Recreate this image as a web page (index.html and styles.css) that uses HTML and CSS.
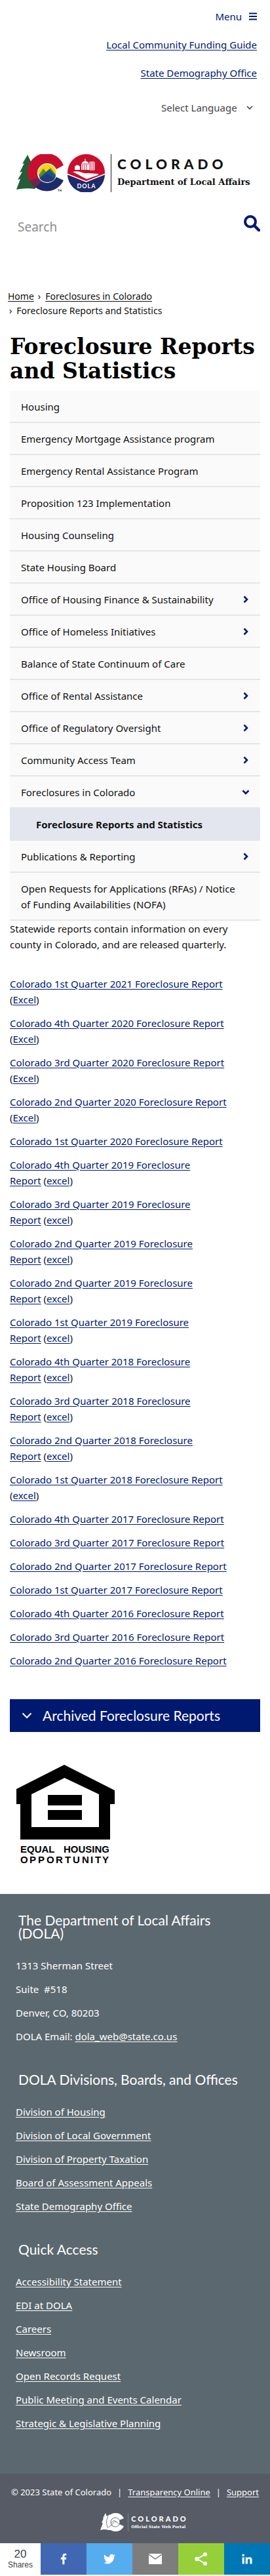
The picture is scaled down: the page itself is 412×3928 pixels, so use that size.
FILE: index.html
```html
<!DOCTYPE html>
<html lang="en">
<head>
<meta charset="utf-8">
<meta name="viewport" content="width=device-width, initial-scale=1">
<title>Foreclosure Reports and Statistics | Department of Local Affairs</title>
<link rel="stylesheet" href="styles.css">
</head>
<body>
<svg class="defs" width="0" height="0" aria-hidden="true">
  <symbol id="chev" viewBox="0 0 8 12"><path d="M1.5 1.5L6 6L1.5 10.5" fill="none" stroke="currentColor" stroke-width="2.6"/></symbol>
</svg>

<header class="header">
  <div class="top-links">
    <button class="menu-btn" type="button">Menu
      <svg width="12" height="12" viewBox="0 0 12 12" aria-hidden="true"><path d="M0 1.5h12M0 6h12M0 10.5h12" stroke="currentColor" stroke-width="2"/></svg>
    </button>
    <a href="#">Local Community Funding Guide</a>
    <a href="#">State Demography Office</a>
    <div class="lang">
      <select aria-label="Select Language"><option>Select Language</option></select>
      <svg width="10" height="7" viewBox="0 0 10 7" aria-hidden="true"><path d="M1 1l4 4l4-4" fill="none" stroke="currentColor" stroke-width="1.6"/></svg>
    </div>
  </div>

  <a class="logo" href="#" aria-label="Colorado Department of Local Affairs">
    <svg width="136" height="58" viewBox="0 0 136 58" aria-hidden="true">
      <path d="M17 1L9 15l3-1L5 28l4-1L2 39l4-1L0 54q14-3 28-1L40 40V12L24 15z" fill="#245d38"/>
      <path d="M72 17A28.500 28.500 0 1 0 26.500 48.500L36 38A15 15 0 0 1 61 23z" fill="#c8102e"/>
      <path d="M72 40A28.500 28.500 0 0 1 26.500 48.500L37 38L61 35z" fill="#1f2a6b"/>
      <path d="M18.500 29A28.500 28.500 0 0 0 26.500 49L38 38L32 24z" fill="#c8102e"/>
      <path d="M21 41A28.500 28.500 0 0 0 29 51L40 40L35 35z" fill="#6b2350"/>
      <circle cx="47" cy="29" r="15" fill="#fff"/>
      <circle cx="47" cy="29" r="13.500" fill="#ffd100"/>
      <path d="M34 32L41 22L46 28L52 21L60 31Q60 42.500 47 42.500Q37 42 34 32z" fill="#5d8a2f"/>
      <path d="M35 36L50 23L60 33Q58 42.500 47 42.500Q38 42 35 36z" fill="#12558f"/>
      <path d="M36 37L47 30L58 37Q54 42.500 47 42.500Q40 42.500 36 37z" fill="#243a78"/>
      <path d="M63 54h2.500M64.200 54v3M66.500 57v-3l1 2l1-2v3" fill="none" stroke="#333" stroke-width=".7"/>
      <circle cx="106.500" cy="28.500" r="28.500" fill="#c8102e"/>
      <path d="M78 30.500L106.500 42L135 30.500A28.500 28.500 0 0 1 78 30.500z" fill="#1f2a6b"/>
      <path d="M78 30.500L106.500 42L135 30.500" fill="none" stroke="#fff" stroke-width="1.500"/>
      <path d="M86 27q8-2 14 1q5 2 9 1l15 1q3 1-1 2.500L107 38q-6-3-13-7z" fill="#fff"/>
      <path d="M89 24v-5q4-5 8 0v5zM99 24v-9q2-4 5.500-4.500V7h1v3.500q4 .5 5.500 4.500v9z" fill="#fff"/>
      <path d="M101 16v8M104 16v8M107 16v8M99 15h12" stroke="#c8102e" stroke-width=".9"/>
      <path d="M112 12h7v12h-7zM112 15h7M112 18h7M112 21h7M114.300 12v12M116.600 12v12" fill="none" stroke="#fff" stroke-width="1"/>
      <text x="107" y="52" text-anchor="middle" class="seal-text">DOLA</text>
    </svg>
    <span class="logo-words">
      <span class="wordmark">COLORADO</span>
      <span class="dept">Department of Local Affairs</span>
    </span>
  </a>

  <form class="search" role="search">
    <input type="search" placeholder="Search" aria-label="Search">
    <button type="button" aria-label="Submit search">
      <svg width="25" height="25" viewBox="0 0 25 25" aria-hidden="true"><circle cx="10" cy="10" r="8" fill="none" stroke="currentColor" stroke-width="4"/><path d="M16 16l7 7" stroke="currentColor" stroke-width="4.500" stroke-linecap="round"/></svg>
    </button>
  </form>
</header>

<main class="main">
  <nav class="crumbs" aria-label="Breadcrumb">
    <div><a href="#">Home</a><span class="sep">›</span><a href="#">Foreclosures in Colorado</a></div>
    <div><span class="sep">›</span>Foreclosure Reports and Statistics</div>
  </nav>
  <h1>Foreclosure Reports and Statistics</h1>

  <ul class="side-nav">
    <li><a href="#">Housing</a></li>
    <li><a href="#">Emergency Mortgage Assistance program</a></li>
    <li><a href="#">Emergency Rental Assistance Program</a></li>
    <li><a href="#">Proposition 123 Implementation</a></li>
    <li><a href="#">Housing Counseling</a></li>
    <li><a href="#">State Housing Board</a></li>
    <li><a href="#">Office of Housing Finance &amp; Sustainability</a><svg class="chev"><use href="#chev"/></svg></li>
    <li><a href="#">Office of Homeless Initiatives</a><svg class="chev"><use href="#chev"/></svg></li>
    <li><a href="#">Balance of State Continuum of Care</a></li>
    <li><a href="#">Office of Rental Assistance</a><svg class="chev"><use href="#chev"/></svg></li>
    <li><a href="#">Office of Regulatory Oversight</a><svg class="chev"><use href="#chev"/></svg></li>
    <li><a href="#">Community Access Team</a><svg class="chev"><use href="#chev"/></svg></li>
    <li><a href="#">Foreclosures in Colorado</a><svg class="chev open"><use href="#chev"/></svg></li>
    <li class="current"><a href="#" aria-current="page">Foreclosure Reports and Statistics</a></li>
    <li><a href="#">Publications &amp; Reporting</a><svg class="chev"><use href="#chev"/></svg></li>
    <li><a href="#">Open Requests for Applications (RFAs) / Notice of Funding Availabilities (NOFA)</a></li>
  </ul>

  <p class="intro">Statewide reports contain information on every county in Colorado, and are released quarterly.</p>

  <div class="reports">
    <p><a href="#">Colorado 1st Quarter 2021 Foreclosure Report</a> (<a href="#">Excel</a>)</p>
    <p><a href="#">Colorado 4th Quarter 2020 Foreclosure Report</a> (<a href="#">Excel</a>)</p>
    <p><a href="#">Colorado 3rd Quarter 2020 Foreclosure Report</a> (<a href="#">Excel</a>)</p>
    <p><a href="#">Colorado 2nd Quarter 2020 Foreclosure Report</a> (<a href="#">Excel</a>)</p>
    <p><a href="#">Colorado 1st Quarter 2020 Foreclosure Report</a></p>
    <p><a href="#">Colorado 4th Quarter 2019 Foreclosure Report</a>&nbsp;(<a href="#">excel</a>)</p>
    <p><a href="#">Colorado 3rd Quarter 2019 Foreclosure Report</a>&nbsp;(<a href="#">excel</a>)</p>
    <p><a href="#">Colorado 2nd Quarter 2019 Foreclosure Report</a>&nbsp;(<a href="#">excel</a>)</p>
    <p><a href="#">Colorado 2nd Quarter 2019 Foreclosure Report</a>&nbsp;(<a href="#">excel</a>)</p>
    <p><a href="#">Colorado 1st Quarter 2019 Foreclosure Report</a>&nbsp;(<a href="#">excel</a>)</p>
    <p><a href="#">Colorado 4th Quarter 2018 Foreclosure Report</a>&nbsp;(<a href="#">excel</a>)</p>
    <p><a href="#">Colorado 3rd Quarter 2018 Foreclosure Report</a>&nbsp;(<a href="#">excel</a>)</p>
    <p><a href="#">Colorado 2nd Quarter 2018 Foreclosure Report</a>&nbsp;(<a href="#">excel</a>)</p>
    <p><a href="#">Colorado 1st Quarter 2018 Foreclosure Report</a> (<a href="#">excel</a>)</p>
    <p><a href="#">Colorado 4th Quarter 2017 Foreclosure Report</a></p>
    <p><a href="#">Colorado 3rd Quarter 2017 Foreclosure Report</a></p>
    <p><a href="#">Colorado 2nd Quarter 2017 Foreclosure Report</a></p>
    <p><a href="#">Colorado 1st Quarter 2017 Foreclosure Report</a></p>
    <p><a href="#">Colorado 4th Quarter 2016 Foreclosure Report</a></p>
    <p><a href="#">Colorado 3rd Quarter 2016 Foreclosure Report</a></p>
    <p><a href="#">Colorado 2nd Quarter 2016 Foreclosure Report</a></p>
  </div>

  <button class="archive" type="button" aria-expanded="false">
    <svg width="16" height="10" viewBox="0 0 16 10" aria-hidden="true"><path d="M1.500 1.500L8 8l6.500-6.500" fill="none" stroke="currentColor" stroke-width="2"/></svg>
    Archived Foreclosure Reports
  </button>

  <svg class="eho" width="150" height="152" viewBox="0 0 150 152" role="img" aria-label="Equal Housing Opportunity">
    <path fill-rule="evenodd" d="M73 0L150 39v21h-7v54H6V60H0V37zM73.500 20L23 45v50h103V45z"/>
    <path d="M48 46h52v16H48zM48 69h52v15H48z"/>
    <g class="eho-text">
      <text x="6" y="134">EQUAL</text><text x="142" y="134" text-anchor="end">HOUSING</text>
      <text y="150" x="6 20 33 46 60 74 86 100 113 120 131">OPPORTUNITY</text>
    </g>
  </svg>
</main>

<footer class="footer">
  <section>
    <h2>The Department of Local Affairs (DOLA)</h2>
    <p>1313 Sherman Street</p>
    <p>Suite&nbsp; #518</p>
    <p>Denver, CO, 80203</p>
    <p>DOLA Email: <a href="#">dola_web@state.co.us</a></p>
  </section>
  <section>
    <h2>DOLA Divisions, Boards, and Offices</h2>
    <p><a href="#">Division of Housing</a></p>
    <p><a href="#">Division of Local Government</a></p>
    <p><a href="#">Division of Property Taxation</a></p>
    <p><a href="#">Board of Assessment Appeals</a></p>
    <p><a href="#">State Demography Office</a></p>
  </section>
  <section>
    <h2>Quick Access</h2>
    <p><a href="#">Accessibility Statement</a></p>
    <p><a href="#">EDI at DOLA</a></p>
    <p><a href="#">Careers</a></p>
    <p><a href="#">Newsroom</a></p>
    <p><a href="#">Open Records Request</a></p>
    <p><a href="#">Public Meeting and Events Calendar</a></p>
    <p><a href="#">Strategic &amp; Legislative Planning</a></p>
  </section>
</footer>

<div class="legal">
  <p class="legal-row"><span>© 2023 State of Colorado</span><span>|</span><a href="#">Transparency Online</a><span>|</span><a href="#">Support</a></p>
  <a class="portal" href="#" aria-label="Colorado Official State Web Portal">
    <svg width="38" height="28" viewBox="0 0 38 28" aria-hidden="true">
      <path d="M8 0L4 8h1L2 15h2L0 26q6-2 13 0h4L15 2l-5 3z" fill="#fff"/>
      <path d="M36 8A14 14 0 1 0 36 20L29 17A7 7 0 1 1 29 11z" fill="#fff"/>
      <circle cx="23" cy="14" r="7" fill="#fff" stroke="#565b66" stroke-width=".8"/>
      <path d="M13 22L23 12l6 5M16 16l5-5l3 3M12 5Q7 14 12 23" fill="none" stroke="#565b66" stroke-width=".8"/>
    </svg>
    <span class="portal-words"><span class="portal-mark">COLORADO</span><span class="portal-sub">Official State Web Portal</span></span>
  </a>
</div>

<div class="share">
  <div class="count"><span class="num">20</span><span class="lbl">Shares</span></div>
  <button class="fb" type="button" aria-label="Share on Facebook"><svg width="24" height="24" viewBox="0 0 32 32"><path d="M17.800 27V17h3.400l.5-3.900h-3.900v-2.500c0-1.100.3-1.900 2-1.900h2V5.200c-.4 0-1.600-.2-3-.2-3 0-5 1.800-5 5.200v2.900h-3.400V17h3.400v10z"/></svg></button>
  <button class="tw" type="button" aria-label="Share on Twitter"><svg width="24" height="24" viewBox="0 0 32 32"><path d="M28 8.600a9.900 9.900 0 0 1-2.800.8 5 5 0 0 0 2.200-2.700c-1 .5-2 1-3.100 1.200a4.900 4.900 0 0 0-8.500 3.300c0 .4 0 .8.100 1.100-4-.2-7.700-2.100-10.100-5.100a4.900 4.900 0 0 0 1.500 6.600c-.8 0-1.500-.3-2.200-.6v.1c0 2.400 1.700 4.300 3.900 4.800a5 5 0 0 1-2.200.1 4.900 4.900 0 0 0 4.600 3.400A9.900 9.900 0 0 1 4 23.600 14 14 0 0 0 25.500 11.200c1-.7 1.800-1.600 2.500-2.600z"/></svg></button>
  <button class="mail" type="button" aria-label="Share by email"><svg width="20" height="16" viewBox="0 0 20 16"><path d="M0 0h20v16H0z"/><path d="M0 1l10 7l10-7" fill="none" stroke="#7d7d7d" stroke-width="1.500"/></svg></button>
  <button class="more" type="button" aria-label="More sharing options"><svg width="20" height="20" viewBox="0 0 20 20"><path d="M16 3L4 10l12 7" fill="none" stroke="#fff" stroke-width="2"/><circle cx="16" cy="3" r="3"/><circle cx="3.500" cy="10" r="3.200"/><circle cx="16" cy="17" r="3"/></svg></button>
  <button class="li" type="button" aria-label="Share on LinkedIn"><svg width="24" height="24" viewBox="0 0 32 32"><path d="M6.200 12.600h4.200v13.500H6.200zm2.100-6.700a2.400 2.400 0 1 1 0 4.900 2.400 2.400 0 0 1 0-4.900M13 12.600h4v1.800h.1c.6-1 2-2.200 4-2.200 4.200 0 5 2.800 5 6.500v7.400h-4.200v-6.600c0-1.500 0-3.600-2.200-3.600s-2.500 1.700-2.500 3.500v6.700H13z"/></svg></button>
</div>
</body>
</html>
```

FILE: styles.css
```css
* { box-sizing: border-box; }
body {
  margin: 0;
  background: #fff;
  color: #111;
  font: 15px/24px "Noto Sans", sans-serif;
}
p, h1, h2, ul { margin: 0; padding: 0; }
ul { list-style: none; }
a { color: #001970; text-underline-offset: 2px; }
button { font: inherit; border: 0; padding: 0; background: none; cursor: pointer; }
svg { display: block; flex: none; }
.defs { position: absolute; }

.header { padding: 13px 15px 0; }
.top-links {
  display: flex;
  flex-direction: column;
  align-items: flex-end;
  gap: 19px;
  padding-right: 5px;
}
.menu-btn { display: flex; align-items: center; gap: 11px; color: #001970; }
.lang { display: flex; align-items: center; gap: 14px; padding: 10px 6px 0 0; color: #444; }
.lang select {
  appearance: none;
  border: 0;
  padding: 0;
  background: none;
  font: inherit;
  line-height: 24px;
  height: 24px;
  color: inherit;
}
.logo { display: flex; align-items: center; gap: 8px; margin-top: 59px; padding-left: 10px; text-decoration: none; color: #111; }
.logo-words { display: flex; flex-direction: column; gap: 4px; border-left: 1px solid #222; padding-left: 9px; height: 58px; justify-content: center; }
.wordmark { font: 900 21px/24px Lato, sans-serif; letter-spacing: 6px; }
.dept { font: bold 13px/24px "DejaVu Serif", serif; white-space: nowrap; }
.seal-text { font: bold 9px Lato, sans-serif; fill: #fff; letter-spacing: 1px; }
.search { display: flex; justify-content: space-between; align-items: flex-start; margin-top: 35px; }
.search input { flex: 1; min-width: 0; height: 36px; border: 0; padding: 0 12px; font: 19px "Noto Sans", sans-serif; background: none; outline: 0; }
.search input::placeholder { color: #8c8c8c; }
.search button { color: #001970; }

.main { padding: 77px 15px 45px; }
.crumbs { font-size: 14px; line-height: 22px; margin-left: -3px; }
.crumbs a { color: #111; }
.sep { margin: 0 7px 0 6px; }
.crumbs div + div .sep { margin-left: 2px; }
h1 { margin-top: 25px; font: bold 33px/37px "DejaVu Serif", serif; color: #000; }

.side-nav { margin-top: 12px; }
.side-nav li {
  display: flex;
  justify-content: space-between;
  align-items: center;
  padding: 12px 18px 11px 17px;
  background: #fafafa;
  border-bottom: 2px solid #e6e6e6;
}
.side-nav a { padding-right: 8px; color: #111; text-decoration: none; }
.side-nav .current { padding-left: 40px; background: #e3e6ef; font-weight: bold; }
.chev { width: 8px; height: 12px; color: #001970; }
.chev.open { transform: rotate(90deg); }

.reports { display: flex; flex-direction: column; gap: 12px; margin-top: 36px; padding-right: 30px; }
.archive {
  display: flex;
  align-items: center;
  gap: 16px;
  width: 100%;
  height: 50px;
  margin-top: 47px;
  padding-left: 18px;
  background: #001970;
  color: #fff;
  font: 21px/24px Lato, sans-serif;
}
.eho { margin: 50px 0 0 10px; }
.eho-text { font: bold 15px "Liberation Sans", sans-serif; }

.footer {
  display: flex;
  flex-direction: column;
  gap: 44px;
  padding: 30px 24px 65px;
  background: #5c6870;
  color: #fff;
}
.footer section { display: flex; flex-direction: column; gap: 12px; }
.footer a, .legal a { color: #fff; }
.footer h2 { margin-bottom: 15px; padding: 0 24px 0 4px; font: 21px/20px Lato, sans-serif; }
.legal {
  display: flex;
  flex-direction: column;
  align-items: center;
  gap: 20px;
  padding: 16px 15px 18px;
  background: #565b66;
  color: #fff;
  font-size: 13px;
}
.legal-row { display: flex; gap: 9px; white-space: nowrap; }
.portal { display: flex; align-items: center; gap: 4px; padding-left: 28px; text-decoration: none; }
.portal-words { display: flex; flex-direction: column; border-left: 1px solid #7d818b; padding-left: 4px; height: 28px; justify-content: center; }
.portal-mark { font: 900 11px/14px Lato, sans-serif; letter-spacing: 3px; color: #fff; }
.portal-sub { font: bold 6px/10px "DejaVu Serif", serif; color: #fff; }

.share { display: grid; grid-template-columns: 62fr repeat(5, 70fr); height: 48px; }
.share button { display: flex; align-items: center; justify-content: center; }
.share button svg { fill: #fff; }
.count { display: flex; flex-direction: column; align-items: center; justify-content: center; background: #fff; color: #444; font-family: "Liberation Sans", sans-serif; }
.num { font-size: 17px; line-height: 18px; }
.lbl { font-size: 12px; line-height: 15px; }
.fb { background: #4267b2; }
.tw { background: #55acee; }
.mail { background: #7d7d7d; }
.more { background: #95d03a; }
.li { background: #0077b5; }
```
